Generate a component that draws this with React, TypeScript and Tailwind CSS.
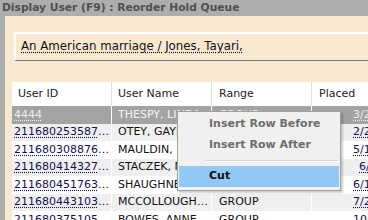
import React from "react";

type Row = { id: string; name: string; range: string; placed: string; indent?: boolean };

const rows: Row[] = [
  { id: "4444", name: "THESPY, LINDA", range: "GROUP", placed: "3/26/2018" },
  { id: "21168025358791", name: "OTEY, GAYLE", range: "GROUP", placed: "2/21/2018" },
  { id: "21168030887612", name: "MAULDIN, KAREN", range: "GROUP", placed: "5/11/2018" },
  { id: "21168041432755", name: "STACZEK, MARY", range: "GROUP", placed: "6/5/2018", indent: true },
  { id: "21168045176304", name: "SHAUGHNESSY, ANN", range: "GROUP", placed: "6/13/2018" },
  { id: "21168044310329", name: "MCCOLLOUGH, DEBORAH", range: "GROUP", placed: "7/24/2018" },
  { id: "21168037510548", name: "BOWES, ANNE", range: "GROUP", placed: "10/2/2018" },
];

const font = { fontFamily: '"DejaVu Sans", Verdana, sans-serif' };

export default function App() {
  return (
    <div className="relative flex h-[220px] w-[368px] flex-col overflow-hidden bg-[#f8e8d0]" style={font}>
      <div className="flex h-[16px] shrink-0 items-center bg-[#adadad] pl-[2px] text-[10.7px] font-bold text-[#505050]">
        Display User (F9) : Reorder Hold Queue
      </div>

      <div className="flex flex-1">
        <div className="w-[5px] shrink-0 bg-[#adadad]" />
        <div className="flex min-w-0 flex-1 flex-col">
          <div className="ml-[9px] mt-[16px] flex h-[29px] w-[420px] shrink-0 items-center border-t-2 border-l-2 border-b border-t-white border-l-white border-b-[#777] pl-[5px] text-[11.8px] text-[#111]">
            <span className="underline decoration-dotted underline-offset-2">An American marriage / Jones, Tayari,</span>
          </div>

          <div className="ml-[7px] mt-[21px] w-[420px] shrink-0 bg-white text-[11px]">
            <div className="flex h-[24px] items-center text-[#222]">
              <div className="flex h-full w-[100px] shrink-0 items-center border-r border-[#dedede] pl-[6px]">User ID</div>
              <div className="flex h-full w-[100px] shrink-0 items-center border-r border-[#dedede] pl-[6px]">User Name</div>
              <div className="flex h-full w-[100px] shrink-0 items-center border-r border-[#dedede] pl-[7px]">Range</div>
              <div className="flex h-full w-[120px] shrink-0 items-center pl-[7px]">Placed</div>
            </div>
            {rows.map((r, i) => {
              const sel = i === 0;
              const bg = sel ? "bg-[#a3a3a3]" : i % 2 === 1 ? "bg-[#efefef]" : "bg-white";
              const link = sel ? "text-[#ececec]" : "text-[#10105a]";
              const plain = sel ? "text-[#f4f4f4]" : "text-[#111]";
              return (
                <div key={r.id} className={`flex h-[17.5px] items-center ${bg}`}>
                  <div className="flex h-full w-[100px] shrink-0 items-center border-r border-white px-[2px]">
                    <span className={`truncate underline decoration-dotted underline-offset-2 ${link}`}>{r.id}</span>
                  </div>
                  <div className={`flex h-full w-[100px] shrink-0 items-center border-r border-white pl-[6px] ${plain}`}>
                    <span className="truncate">{r.name}</span>
                  </div>
                  <div className={`flex h-full w-[100px] shrink-0 items-center border-r border-white pl-[7px] ${plain}`}>
                    {r.range}
                  </div>
                  <div className={`flex h-full w-[120px] shrink-0 items-center ${r.indent ? "pl-[47px]" : "pl-[41px]"}`}>
                    <span className={`whitespace-nowrap underline decoration-dotted underline-offset-2 ${link}`}>{r.placed}</span>
                  </div>
                </div>
              );
            })}
          </div>
        </div>
      </div>

      <div className="absolute left-[177px] top-[111px] flex w-[164px] flex-col border border-[#a0a0a0] bg-[#f0f0f0] p-[1px] text-[11px] font-bold shadow-[2px_2px_2px_rgba(0,0,0,0.2)]">
        <div className="flex h-[22px] items-center pl-[30px] text-[#6d6d6d]">Insert Row Before</div>
        <div className="flex h-[21px] items-center pl-[30px] text-[#6d6d6d]">Insert Row After</div>
        <div className="ml-[27px] mr-[1px] mt-[4px] mb-[4px] border-t border-b border-t-[#d5d5d5] border-b-white" />
        <div className="flex h-[21px] items-center bg-[#94c8f4] pl-[30px] text-[#111]">Cut</div>
        <div className="h-[2px]" />
      </div>
    </div>
  );
}
